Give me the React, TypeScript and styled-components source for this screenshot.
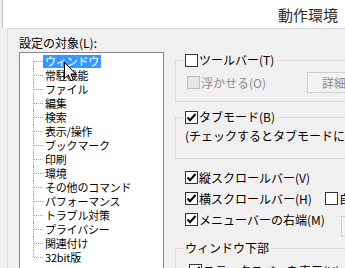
import React from "react";
import styled, { createGlobalStyle } from "styled-components";

const Global = createGlobalStyle`
  html, body { margin: 0; padding: 0; overflow: hidden; background: #f0f0f0; }
  body {
    width: 345px; height: 268px;
    font-family: "Noto Sans CJK JP", "Noto Sans", sans-serif;
    font-size: 12px; color: #000;
  }
`;

const Frame = styled.div`
  position: relative;
  width: 345px;
  height: 268px;
  overflow: hidden;
  background: #f0f0f0;
`;

const Header = styled.div`
  margin-left: 2px;
  height: 28px;
  border-left: 1px solid #c4c4c4;
  background: #fff;
  display: flex;
  align-items: center;
  justify-content: flex-end;
  padding-right: 7px;
  font-size: 15px;
  line-height: 15px;
  color: #2b2b2b;
`;

const Body = styled.div`
  margin-left: 7px;
  border-left: 1px solid #d9d9d9;
  border-top: 1px solid #d9d9d9;
  padding: 6px 0 0 11px;
  display: flex;
  gap: 11px;
  height: 300px;
`;

const LeftCol = styled.div`
  flex: none;
  width: 145px;
  display: flex;
  flex-direction: column;
`;

const FieldLabel = styled.div`
  height: 16px;
  line-height: 16px;
  margin-bottom: 1px;
`;

const TreeBox = styled.div`
  height: 240px;
  border: 1px solid #828790;
  background: #fff;
  padding: 1px 0 0 13px;
  box-sizing: border-box;
  font-size: 11px;
  letter-spacing: -0.2px;
`;

const TreeRow = styled.div`
  display: flex;
  height: 14px;
  align-items: center;
`;

const Connector = styled.span<{ $place: "first" | "middle" | "last" }>`
  position: relative;
  flex: none;
  width: 10px;
  height: 14px;
  &::before {
    content: "";
    position: absolute;
    left: 0;
    top: ${(p) => (p.$place === "first" ? "7px" : "0")};
    height: ${(p) => (p.$place === "middle" ? "14px" : "7px")};
    border-left: 1px dotted #a0a0a0;
  }
  &::after {
    content: "";
    position: absolute;
    left: 1px;
    top: 7px;
    width: 9px;
    border-top: 1px dotted #a0a0a0;
  }
`;

const TreeLabel = styled.span<{ $selected?: boolean }>`
  height: 13px;
  line-height: 13px;
  padding: 0 2px;
  white-space: nowrap;
  background: ${(p) => (p.$selected ? "#3399ff" : "transparent")};
  color: ${(p) => (p.$selected ? "#fff" : "#000")};
`;

const RightCol = styled.div`
  flex: none;
  width: 260px;
  margin-top: 18px;
  display: flex;
  flex-direction: column;
`;

const Group = styled.fieldset<{ $pt: number; $pb: number; $mt: number; $pl?: number }>`
  margin: ${(p) => p.$mt}px 0 0 0;
  min-width: 0;
  border: 1px solid #dcdcdc;
  padding: ${(p) => p.$pt}px 0 ${(p) => p.$pb}px ${(p) => p.$pl ?? 7}px;
`;

const Legend = styled.legend`
  padding: 0 2px;
  height: 14px;
  line-height: 14px;
  display: flex;
  align-items: center;
  gap: 1px;
  white-space: nowrap;
`;

const Row = styled.div<{ $indent?: number }>`
  display: flex;
  align-items: center;
  height: 21px;
  margin-left: ${(p) => p.$indent ?? 0}px;
  white-space: nowrap;
`;

const CheckCell = styled.div<{ $width?: number }>`
  display: flex;
  align-items: center;
  gap: 1px;
  width: ${(p) => (p.$width ? `${p.$width}px` : "auto")};
  flex: none;
`;

const Text = styled.span<{ $disabled?: boolean }>`
  line-height: 14px;
  color: ${(p) => (p.$disabled ? "#8d8d8d" : "#000")};
  white-space: nowrap;
`;

const Note = styled.div`
  line-height: 14px;
  height: 14px;
  padding-left: 2px;
  white-space: nowrap;
`;

const Box = styled.span<{ $disabled?: boolean }>`
  flex: none;
  width: 13px;
  height: 13px;
  box-sizing: border-box;
  border: 1px solid ${(p) => (p.$disabled ? "#bcbcbc" : "#333")};
  background: ${(p) => (p.$disabled ? "#e6e6e6" : "#fff")};
  display: flex;
  align-items: center;
  justify-content: center;
`;

const Button = styled.div<{ $mt?: number; $ml?: number }>`
  flex: none;
  height: 21px;
  box-sizing: border-box;
  padding: 0 14px;
  margin-top: ${(p) => p.$mt ?? 0}px;
  margin-left: ${(p) => p.$ml ?? 0}px;
  border: 1px solid #cfcfcf;
  background: #f3f3f3;
  color: #8a8a8a;
  line-height: 19px;
  white-space: nowrap;
`;

const ListGrid = styled.div`
  margin: 8px 0 0 10px;
  display: grid;
  grid-template-columns: 140px auto;
  grid-auto-rows: 21px;
  align-items: center;
`;

const SubCell = styled.div`
  align-self: start;
  height: 21px;
  display: flex;
  overflow: visible;
`;

const Cursor = styled.svg`
  position: absolute;
  left: 64px;
  top: 62px;
`;

function Check({ checked, disabled }: { checked?: boolean; disabled?: boolean }) {
  return (
    <Box $disabled={disabled}>
      {checked && (
        <svg width="11" height="11" viewBox="0 0 11 11">
          <polyline points="1.5,5.5 4,8.2 9.5,2" fill="none" stroke="#000" strokeWidth="2" />
        </svg>
      )}
    </Box>
  );
}

const treeItems = [
  "ウィンドウ",
  "常駐機能",
  "ファイル",
  "編集",
  "検索",
  "表示/操作",
  "ブックマーク",
  "印刷",
  "環境",
  "その他のコマンド",
  "パフォーマンス",
  "トラブル対策",
  "プライバシー",
  "関連付け",
  "32bit版",
];

export default function App() {
  return (
    <Frame>
      <Global />
      <Header>動作環境</Header>
      <Body>
        <LeftCol>
          <FieldLabel>設定の対象(L):</FieldLabel>
          <TreeBox>
            {treeItems.map((t, i) => (
              <TreeRow key={t}>
                <Connector $place={i === 0 ? "first" : i === treeItems.length - 1 ? "last" : "middle"} />
                <TreeLabel $selected={i === 0}>{t}</TreeLabel>
              </TreeRow>
            ))}
          </TreeBox>
        </LeftCol>
        <RightCol>
          <Group $mt={0} $pt={5} $pb={8}>
            <Legend>
              <Check />
              <Text>ツールバー(T)</Text>
            </Legend>
            <Row $indent={4}>
              <CheckCell $width={120}>
                <Check disabled />
                <Text $disabled>浮かせる(O)</Text>
              </CheckCell>
              <Button>詳細...</Button>
            </Row>
          </Group>
          <Group $mt={8} $pt={5} $pb={15}>
            <Legend>
              <Check checked />
              <Text>タブモード(B)</Text>
            </Legend>
            <Note>(チェックするとタブモードに切り替わります)</Note>
          </Group>
          <ListGrid>
            <CheckCell>
              <Check checked />
              <Text>縦スクロールバー(V)</Text>
            </CheckCell>
            <div />
            <CheckCell>
              <Check checked />
              <Text>横スクロールバー(H)</Text>
            </CheckCell>
            <CheckCell>
              <Check />
              <Text>自動的に隠す(A)</Text>
            </CheckCell>
            <CheckCell>
              <Check checked />
              <Text>メニューバーの右端(M)</Text>
            </CheckCell>
            <SubCell>
              <Button $mt={7} $ml={16}>
                設定...
              </Button>
            </SubCell>
          </ListGrid>
          <Group $mt={11} $pt={5} $pb={8}>
            <Legend>
              <Text>ウィンドウ下部</Text>
            </Legend>
            <Row $indent={6}>
              <CheckCell>
                <Check checked />
                <Text>ステータスバーを表示(U)</Text>
              </CheckCell>
            </Row>
          </Group>
        </RightCol>
      </Body>
      <Cursor width="13" height="20" viewBox="0 0 13 20">
        <path
          d="M0.5 0.5 L0.5 16.5 L4.3 12.8 L6.8 18.8 L9.3 17.8 L6.9 12 L11.8 12 Z"
          fill="#fff"
          stroke="#000"
          strokeWidth="1"
          strokeLinejoin="miter"
        />
      </Cursor>
    </Frame>
  );
}
